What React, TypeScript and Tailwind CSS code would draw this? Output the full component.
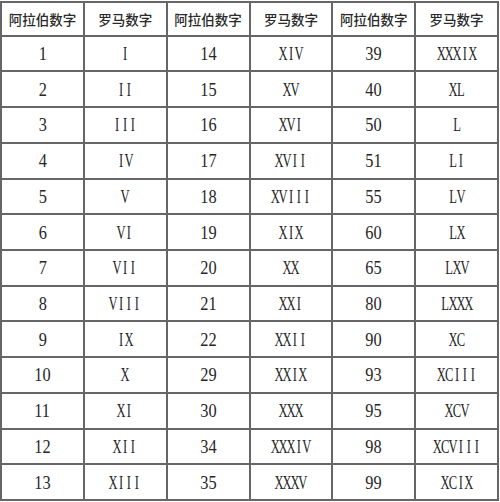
const rows: [string, string, string, string, string, string][] = [
  ["1", "I", "14", "XIV", "39", "XXXIX"],
  ["2", "II", "15", "XV", "40", "XL"],
  ["3", "III", "16", "XVI", "50", "L"],
  ["4", "IV", "17", "XVII", "51", "LI"],
  ["5", "V", "18", "XVIII", "55", "LV"],
  ["6", "VI", "19", "XIX", "60", "LX"],
  ["7", "VII", "20", "XX", "65", "LXV"],
  ["8", "VIII", "21", "XXI", "80", "LXXX"],
  ["9", "IX", "22", "XXII", "90", "XC"],
  ["10", "X", "29", "XXIX", "93", "XCIII"],
  ["11", "XI", "30", "XXX", "95", "XCV"],
  ["12", "XII", "34", "XXXIV", "98", "XCVIII"],
  ["13", "XIII", "35", "XXXV", "99", "XCIX"],
];

const headers = ["阿拉伯数字", "罗马数字", "阿拉伯数字", "罗马数字", "阿拉伯数字", "罗马数字"];

// 原图是宋体：半角等宽。罗马数字每个字母放进等宽格子里再整体压窄
function Roman({ value }: { value: string }) {
  return (
    <span className="inline-flex scale-x-[0.66] font-['Liberation_Serif',serif] text-[19px] leading-none">
      {value.split("").map((c, i) => (
        <span key={i} className="inline-flex w-[12px] justify-center">
          {c}
        </span>
      ))}
    </span>
  );
}

function Cell({ value, roman }: { value: string; roman: boolean }) {
  return (
    <div className="bg-white flex items-center justify-center text-[#262626]">
      {roman ? (
        <Roman value={value} />
      ) : (
        <span className="inline-block scale-x-[0.86] font-['Liberation_Serif',serif] text-[19px] leading-none">
          {value}
        </span>
      )}
    </div>
  );
}

export default function App() {
  return (
    <div className="w-[500px] h-[502px] bg-white pt-[1px]">
      <div className="w-[499px] h-[500px] grid grid-cols-6 grid-rows-[31.7px_repeat(13,1fr)] gap-[2px] p-[2px] bg-[#666]">
        {headers.map((h, i) => (
          <div
            key={i}
            className="bg-white flex items-center justify-center font-['Noto_Sans_CJK_SC',sans-serif] text-[13.5px] font-medium text-[#2a2a2a]"
          >
            {h}
          </div>
        ))}
        {rows.map((r) =>
          r.map((v, i) => <Cell key={`${r[0]}-${i}`} value={v} roman={i % 2 === 1} />)
        )}
      </div>
    </div>
  );
}
